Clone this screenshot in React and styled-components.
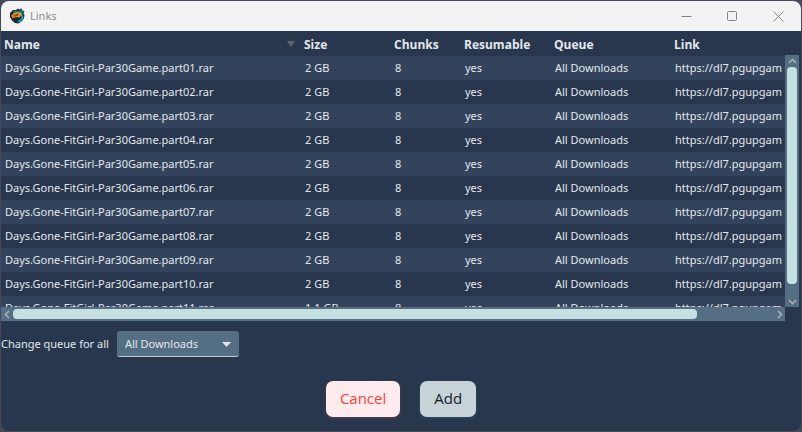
import React from 'react';
import styled, { createGlobalStyle } from 'styled-components';

const GlobalStyle = createGlobalStyle`
  * { box-sizing: border-box; }
  body {
    margin: 0;
    background: #45495a;
    font-family: "Noto Sans", "Open Sans", sans-serif;
    font-size: 11px;
    color: #e3e8ec;
  }
  button, select { font-family: inherit; }
`;

const Desktop = styled.div`
  display: flex;
  height: 100vh;
  padding: 1px;
`;

const Window = styled.main`
  flex: 1;
  min-width: 0;
  display: flex;
  flex-direction: column;
  border-radius: 8px;
  overflow: hidden;
  background: #28374d;
`;

const TitleBar = styled.header`
  display: flex;
  align-items: center;
  flex: none;
  height: 30px;
  padding-left: 8px;
  background: #f3f3f3;
  color: #8c8c8c;
`;

const Title = styled.h1`
  flex: 1;
  margin: 0 0 0 5px;
  padding-bottom: 2px;
  font-size: 11px;
  font-weight: 400;
`;

const WindowButton = styled.button`
  display: flex;
  align-items: center;
  justify-content: center;
  width: 46px;
  height: 30px;
  padding: 0;
  border: 0;
  background: transparent;
  color: #858585;
`;

const TableArea = styled.section`
  flex: 1;
  min-height: 0;
  display: grid;
  grid-template-columns: minmax(0, 1fr) 14px;
  grid-template-rows: minmax(0, 1fr) 14px;
  padding-right: 2px;
`;

const Viewport = styled.div`
  overflow: hidden;
`;

const Table = styled.table`
  width: 100%;
  table-layout: fixed;
  border-collapse: collapse;
`;

const Column = styled.col`
  width: ${(p) => p.$width};
`;

const HeaderCell = styled.th`
  height: 25px;
  padding: 3px 5px 0 3px;
  text-align: left;
  font-family: "Open Sans", "Noto Sans", sans-serif;
  font-size: 12px;
  font-weight: 700;
  line-height: 18px;
  white-space: nowrap;
`;

const HeaderContent = styled.div`
  display: flex;
  align-items: center;
  justify-content: space-between;
`;

const Row = styled.tr`
  &:nth-child(odd) { background: #33435c; }
`;

const Cell = styled.td`
  height: 24px;
  padding: 0 0 0 4px;
  line-height: 18px;
  white-space: nowrap;
  overflow: hidden;
`;

const ScrollBar = styled.div`
  display: flex;
  flex-direction: ${(p) => (p.$vertical ? 'column' : 'row')};
  align-items: stretch;
  padding: ${(p) => (p.$vertical ? '0 2px' : '2px 0')};
  margin-top: ${(p) => (p.$vertical ? '24px' : '0')};
  background: #546e83;
  color: #a9b1b8;
`;

const ScrollButton = styled.button`
  display: flex;
  align-items: center;
  justify-content: center;
  flex: 0 0 12px;
  padding: 0;
  border: 0;
  background: transparent;
  color: inherit;
`;

const Track = styled.div`
  flex: 1;
  display: flex;
  flex-direction: ${(p) => (p.$vertical ? 'column' : 'row')};
`;

const Thumb = styled.div`
  flex: 0 0 ${(p) => p.$size};
  border-radius: 4px;
  background: #c5e0e0;
`;

const QueueBar = styled.div`
  display: flex;
  align-items: center;
  flex: none;
  gap: 8px;
  padding: 10px 0;
`;

const QueueLabel = styled.label`
  padding-bottom: 2px;
`;

const SelectBox = styled.div`
  position: relative;
  width: 122px;
`;

const Select = styled.select`
  appearance: none;
  display: block;
  width: 100%;
  height: 26px;
  padding: 0 24px 0 8px;
  border: 0;
  border-bottom: 1px solid #c4cbd0;
  border-radius: 3px;
  background: #546e83;
  color: #e3e8ec;
  font-size: 11px;
`;

const SelectArrow = styled.svg`
  position: absolute;
  top: 11px;
  right: 8px;
  pointer-events: none;
`;

const Actions = styled.footer`
  display: flex;
  justify-content: center;
  flex: none;
  gap: 20px;
  padding: 14px 0;
`;

const ActionButton = styled.button`
  height: 36px;
  padding: 0 14px 2px;
  border: 0;
  border-radius: 7px;
  font-family: "Open Sans", "Noto Sans", sans-serif;
  font-size: 15px;
  line-height: 24px;
  background: ${(p) => (p.$danger ? '#ffebee' : '#c8d3d8')};
  color: ${(p) => (p.$danger ? '#f44336' : '#101d2c')};
  box-shadow: 0 1px 3px ${(p) => (p.$danger ? '#84445088' : '#2b689088')};
`;

const columns = [
  { label: 'Name', width: '300px', sorted: true },
  { label: 'Size', width: '90px' },
  { label: 'Chunks', width: '70px' },
  { label: 'Resumable', width: '90px' },
  { label: 'Queue', width: '120px' },
  { label: 'Link', width: 'auto' },
];

const files = Array.from({ length: 11 }, (_, i) => ({
  name: `Days.Gone-FitGirl-Par30Game.part${String(i + 1).padStart(2, '0')}.rar`,
  size: i === 10 ? '1.1 GB' : '2 GB',
}));

const arrows = {
  up: 'M1 6 L4.5 2.5 L8 6',
  down: 'M1 3 L4.5 6.5 L8 3',
  left: 'M6 1 L2.5 4.5 L6 8',
  right: 'M3 1 L6.5 4.5 L3 8',
};

function Arrow({ direction }) {
  return (
    <svg width="9" height="9" viewBox="0 0 9 9" fill="none" stroke="currentColor" strokeWidth="1.6">
      <path d={arrows[direction]} />
    </svg>
  );
}

function AppLogo() {
  return (
    <svg width="16" height="16" viewBox="0 0 16 16" aria-hidden="true">
      <path d="M4 2 L7 2 L9 .5 L10 1.5 L13 .5 L13 2.5 L15.5 3 L14.5 5 L15.5 7 L15 10 L13 13 L9.5 15.5 L6 15 L3 12.5 L1 9 L1 5Z" fill="#152733" />
      <path d="M4 3 L7 2.5 L10 3 L13 1 L12.5 3 L14.8 3.5 L13 5 L14.8 6 L14 8 L12 7 L9 5 L5 5Z" fill="#167b8c" />
      <path d="M14.5 8 L14 11 L11 14 L8 14.5 L10 12 L12 11 L12.5 8Z" fill="#19a5b5" />
      <path d="M2 8 L4 5.5 L8 4 L12 5 L13 7.5 L10 9.5 L7 9 L4 10.5Z" fill="#e58b1c" />
      <path d="M3 8 L6 7.5 L8 6 L10 6.5 L8.5 7.5 L5.5 8.5Z" fill="#543c25" />
      <path d="M9 5 L12 5.5 L11 6.5Z" fill="#ffc04b" />
      <path d="M3 11 L6 10 L9 11 L7 13.5Z" fill="#202a35" />
    </svg>
  );
}

function Scroll({ vertical, size }) {
  return (
    <ScrollBar $vertical={vertical}>
      <ScrollButton aria-label={vertical ? 'Scroll up' : 'Scroll left'}>
        <Arrow direction={vertical ? 'up' : 'left'} />
      </ScrollButton>
      <Track $vertical={vertical}>
        <Thumb $size={size} />
      </Track>
      <ScrollButton aria-label={vertical ? 'Scroll down' : 'Scroll right'}>
        <Arrow direction={vertical ? 'down' : 'right'} />
      </ScrollButton>
    </ScrollBar>
  );
}

export default function App() {
  return (
    <Desktop>
      <GlobalStyle />
      <Window>
        <TitleBar>
          <AppLogo />
          <Title>Links</Title>
          <WindowButton aria-label="Minimize">
            <svg width="11" height="11" viewBox="0 0 11 11" stroke="currentColor">
              <path d="M.5 5.5 H10.5" />
            </svg>
          </WindowButton>
          <WindowButton aria-label="Maximize">
            <svg width="11" height="11" viewBox="0 0 11 11" fill="none" stroke="currentColor">
              <rect x=".5" y=".5" width="9" height="9" rx="1" />
            </svg>
          </WindowButton>
          <WindowButton aria-label="Close">
            <svg width="11" height="11" viewBox="0 0 11 11" stroke="currentColor">
              <path d="M.5 .5 L10.5 10.5 M10.5 .5 L.5 10.5" />
            </svg>
          </WindowButton>
        </TitleBar>

        <TableArea>
          <Viewport>
            <Table>
              <colgroup>
                {columns.map((c) => <Column key={c.label} $width={c.width} />)}
              </colgroup>
              <thead>
                <tr>
                  {columns.map((c) => (
                    <HeaderCell key={c.label} scope="col">
                      <HeaderContent>
                        {c.label}
                        {c.sorted && (
                          <svg width="10" height="8" viewBox="0 0 10 8" aria-hidden="true">
                            <path d="M1 0 H9 L5 6Z" fill="#626368" />
                          </svg>
                        )}
                      </HeaderContent>
                    </HeaderCell>
                  ))}
                </tr>
              </thead>
              <tbody>
                {files.map((f) => (
                  <Row key={f.name}>
                    <Cell>{f.name}</Cell>
                    <Cell>{f.size}</Cell>
                    <Cell>8</Cell>
                    <Cell>yes</Cell>
                    <Cell>All Downloads</Cell>
                    <Cell>https://dl7.pgupgam</Cell>
                  </Row>
                ))}
              </tbody>
            </Table>
          </Viewport>
          <Scroll vertical size="95%" />
          <Scroll size="90%" />
        </TableArea>

        <QueueBar>
          <QueueLabel htmlFor="queue">Change queue for all</QueueLabel>
          <SelectBox>
            <Select id="queue" defaultValue="All Downloads">
              <option>All Downloads</option>
            </Select>
            <SelectArrow width="9" height="5" viewBox="0 0 9 5" aria-hidden="true">
              <path d="M0 0 H9 L4.5 5Z" fill="#e3e8ec" />
            </SelectArrow>
          </SelectBox>
        </QueueBar>

        <Actions>
          <ActionButton $danger>Cancel</ActionButton>
          <ActionButton>Add</ActionButton>
        </Actions>
      </Window>
    </Desktop>
  );
}
